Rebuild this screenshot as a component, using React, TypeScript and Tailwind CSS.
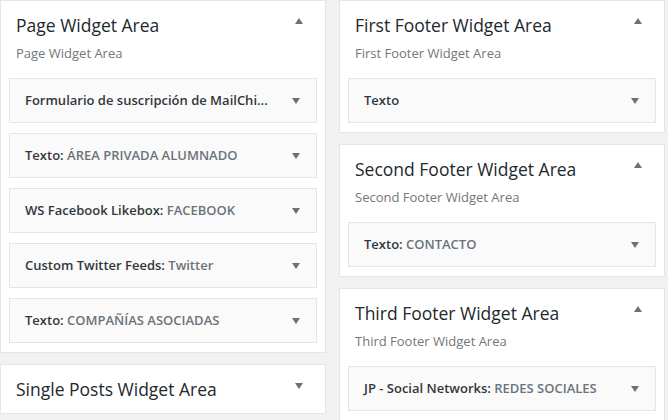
const font = { fontFamily: '"Open Sans", "Liberation Sans", sans-serif' };

type Widget = { name: string; label?: string };

type Area = { title: string; open: boolean; widgets: Widget[] };

const left: Area[] = [
  {
    title: "Page Widget Area",
    open: true,
    widgets: [
      { name: "Formulario de suscripción de MailChi..." },
      { name: "Texto", label: "ÁREA PRIVADA ALUMNADO" },
      { name: "WS Facebook Likebox", label: "FACEBOOK" },
      { name: "Custom Twitter Feeds", label: "Twitter" },
      { name: "Texto", label: "COMPAÑÍAS ASOCIADAS" },
    ],
  },
  { title: "Single Posts Widget Area", open: false, widgets: [] },
];

const right: Area[] = [
  { title: "First Footer Widget Area", open: true, widgets: [{ name: "Texto" }] },
  { title: "Second Footer Widget Area", open: true, widgets: [{ name: "Texto", label: "CONTACTO" }] },
  {
    title: "Third Footer Widget Area",
    open: true,
    widgets: [{ name: "JP - Social Networks", label: "REDES SOCIALES" }],
  },
];

const Arrow = ({ up }: { up?: boolean }) => (
  <svg width="8" height="6" viewBox="0 0 8 6" className="shrink-0">
    <polygon points={up ? "4,0 8,6 0,6" : "0,0 8,0 4,6"} fill="#6b7177" />
  </svg>
);

const WidgetRow = ({ widget }: { widget: Widget }) => (
  <div className="h-[45px] bg-[#fafafa] border border-[#e5e5e5] flex items-center justify-between pl-[15px] pr-[16px]">
    <span className="text-[13px] font-semibold text-[#32373c] whitespace-nowrap">
      {widget.name}
      {widget.label && (
        <>
          : <span className="text-[#6b7379]">{widget.label}</span>
        </>
      )}
    </span>
    <Arrow />
  </div>
);

const Panel = ({ area }: { area: Area }) => (
  <div className="bg-white border border-[#e5e5e5]">
    <div className="flex items-start justify-between pl-[15px] pr-[22px] pt-[12px] pb-[12px]">
      <h2 className="text-[17.5px] leading-[24px] text-[#23282d]">{area.title}</h2>
      <div className={area.open ? "mt-[5px]" : "mt-[6px]"}>
        <Arrow up={area.open} />
      </div>
    </div>
    {area.open && (
      <>
        <p className="-mt-[6px] pl-[15px] text-[13px] leading-[20px] text-[#72777c]">{area.title}</p>
        <div className="mt-[15px] px-[8px] pb-[9px] flex flex-col gap-[10px]">
          {area.widgets.map((w, i) => (
            <WidgetRow key={i} widget={w} />
          ))}
        </div>
      </>
    )}
  </div>
);

export default function App() {
  return (
    <div style={font} className="w-[668px] h-[420px] overflow-hidden bg-[#f1f1f1] flex gap-[13px]">
      <div className="w-[326px] flex flex-col gap-[11px]">
        {left.map((a) => (
          <Panel key={a.title} area={a} />
        ))}
      </div>
      <div className="w-[326px] flex flex-col gap-[11px]">
        {right.map((a) => (
          <Panel key={a.title} area={a} />
        ))}
      </div>
    </div>
  );
}
